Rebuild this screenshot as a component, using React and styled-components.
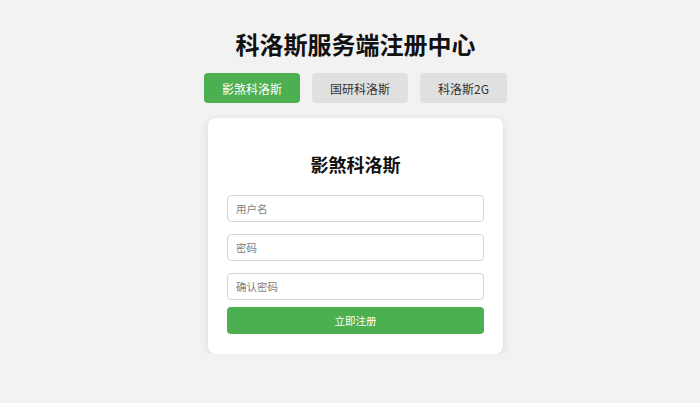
import React, { useState } from "react";
import styled, { createGlobalStyle } from "styled-components";

const Global = createGlobalStyle`
  html, body { margin: 0; padding: 0; background: #f2f2f2; }
  body { font-family: "Noto Sans CJK SC", "Noto Sans", sans-serif; color: #111; }
  * { box-sizing: border-box; }
`;

const Page = styled.div`
  display: flex;
  flex-direction: column;
  align-items: center;
  padding: 28px 0 0 11px;
`;

const Title = styled.h1`
  margin: 0;
  font-size: 24px;
  line-height: 32px;
  font-weight: 700;
  color: #111;
`;

const Tabs = styled.div`
  display: flex;
  gap: 12px;
  margin-top: 13px;
`;

const Tab = styled.button`
  height: 30px;
  padding: 0 18px;
  border: none;
  border-radius: 4px;
  font-family: inherit;
  font-size: 12px;
  cursor: pointer;
  background: ${(p) => (p.$active ? "#4caf50" : "#e0e0e0")};
  color: ${(p) => (p.$active ? "#fff" : "#333")};
`;

const Card = styled.div`
  margin-top: 15px;
  width: 295px;
  padding: 19px 19px 20px;
  background: #fff;
  border-radius: 8px;
  box-shadow: 0 2px 8px rgba(0, 0, 0, 0.1);
  display: flex;
  flex-direction: column;
`;

const CardTitle = styled.h2`
  margin: 15px 0 19px;
  font-size: 18px;
  line-height: 24px;
  font-weight: 700;
  text-align: center;
  color: #111;
`;

const Input = styled.input`
  height: 27px;
  margin-bottom: 12px;
  padding: 0 8px;
  border: 1px solid #d4d4d4;
  border-radius: 4px;
  font-family: inherit;
  font-size: 10.5px;
  color: #333;
  outline: none;
  &::placeholder { color: #808080; }
  &:last-of-type { margin-bottom: 7px; }
`;

const Submit = styled.button`
  height: 27px;
  border: none;
  border-radius: 4px;
  background: #4caf50;
  color: #fff;
  font-family: inherit;
  font-size: 10.5px;
  cursor: pointer;
`;

const servers = ["影煞科洛斯", "国研科洛斯", "科洛斯2G"];

export default function App() {
  const [active, setActive] = useState(0);
  return (
    <>
      <Global />
      <Page>
        <Title>科洛斯服务端注册中心</Title>
        <Tabs>
          {servers.map((s, i) => (
            <Tab key={s} $active={i === active} onClick={() => setActive(i)}>
              {s}
            </Tab>
          ))}
        </Tabs>
        <Card>
          <CardTitle>{servers[active]}</CardTitle>
          <Input placeholder="用户名" />
          <Input type="password" placeholder="密码" />
          <Input type="password" placeholder="确认密码" />
          <Submit>立即注册</Submit>
        </Card>
      </Page>
    </>
  );
}
